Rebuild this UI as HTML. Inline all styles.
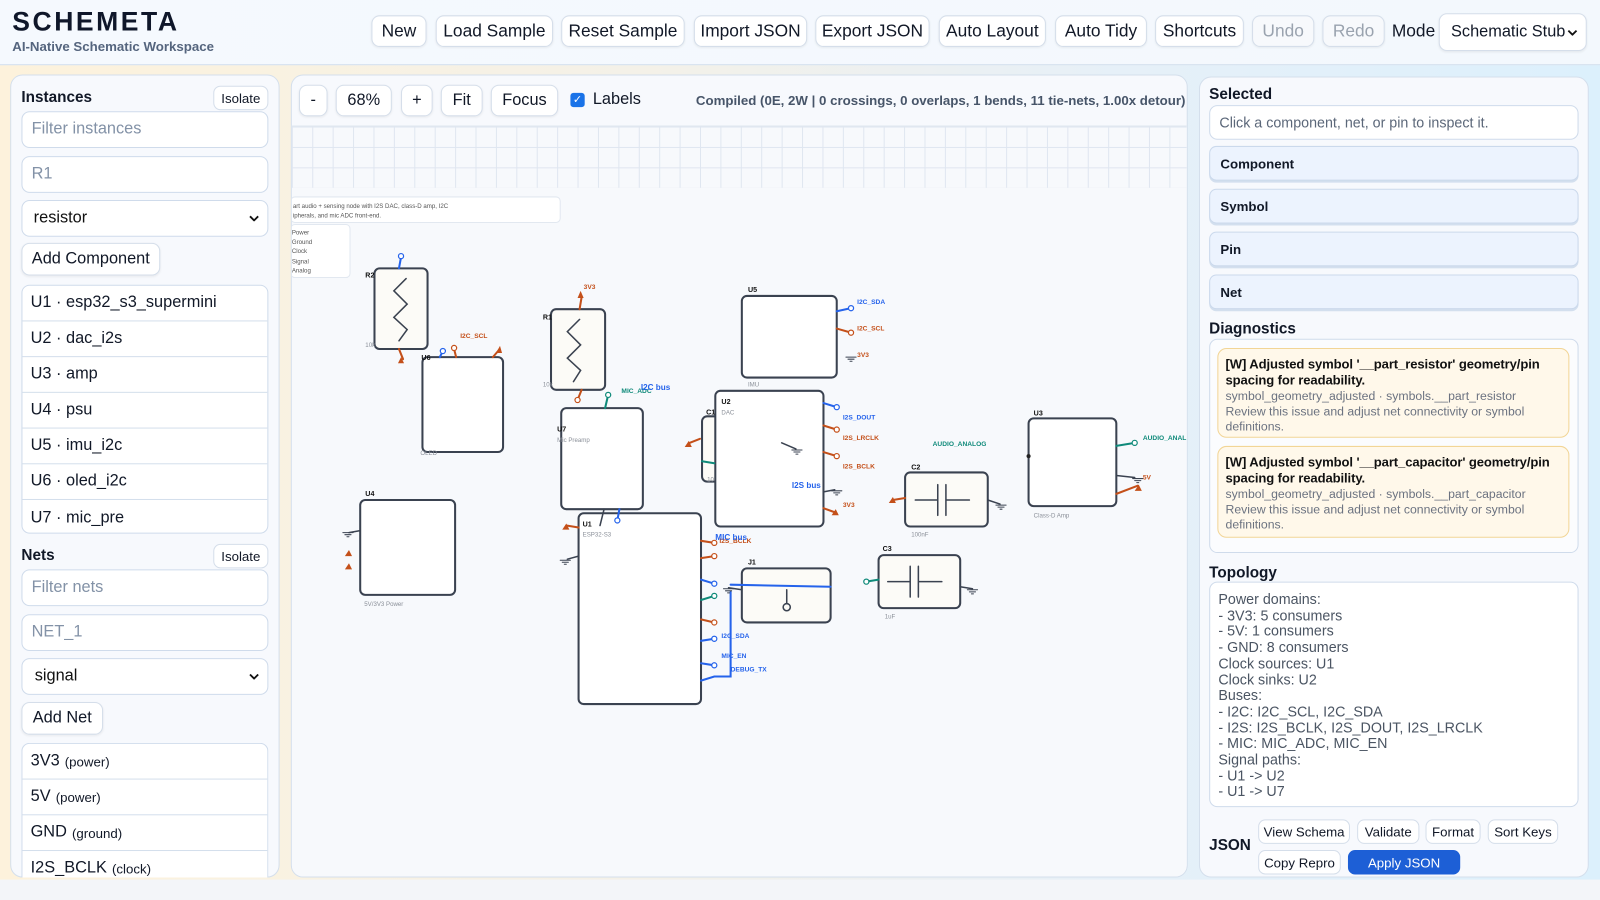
<!DOCTYPE html>
<html><head><meta charset="utf-8"><style>
*{box-sizing:border-box;margin:0;padding:0}
body{width:1600px;height:900px;overflow:hidden;font-family:"Liberation Sans",Arial,sans-serif;background:#f3f5f9;position:relative;color:#111827}
#root{position:absolute;left:0;top:0;width:1568px;height:882px;transform:scale(1.020408);transform-origin:0 0}
.abs{position:absolute}
.hdr{left:0;top:0;width:1568px;height:64px;background:linear-gradient(90deg,#f5f9fe,#f3f8fd);border-bottom:1px solid #cfdcec}
.main{left:0;top:64px;width:1568px;height:798px;background:linear-gradient(90deg,#fdf2dc 0%,#f4f1e8 40%,#e6f0f8 70%,#dcf0fc 100%)}
.btn{position:absolute;height:31px;border:1px solid #d5deea;border-radius:8px;background:#fff;font-size:17px;display:flex;align-items:center;justify-content:center;color:#111827;box-shadow:0 1px 2px rgba(0,0,0,.06);white-space:nowrap}
.dis{color:#9aa3af;background:#f7f9fc}
.panel{position:absolute;background:#f7f9fd;border:1px solid #d4dfec;border-radius:12px}
.inp{position:absolute;border:1px solid #cfdbeb;border-radius:8px;background:#fff;font-size:16px;color:#8392a7;padding-left:9px;display:flex;align-items:center}
.title{position:absolute;font-weight:bold;font-size:15px}
.sm{position:absolute;height:24px;border:1px solid #d5deea;border-radius:7px;background:#fff;font-size:13px;display:flex;align-items:center;justify-content:center}
.list{position:absolute;border:1px solid #cfdbeb;border-radius:8px;background:#fff;overflow:hidden}
.list div{height:35px;border-bottom:1px solid #d4dfec;font-size:16px;padding-left:8px;display:flex;align-items:center}
.list small{font-size:13px;margin-left:5px}
.acc{position:absolute;left:1185px;width:362px;height:34px;border:1px solid #cbd9ec;border-radius:7px;background:#ecf3fe;font-weight:bold;font-size:13px;padding-left:10px;display:flex;align-items:center;box-shadow:0 2px 0 #d3dfee}
.card{position:absolute;left:1193px;width:345px;border:1px solid #f2d596;border-radius:9px;background:#fff8ea;padding:7px 7px;font-size:12px;color:#6b7280;line-height:15px}
.card b{color:#111;font-size:12.8px;display:block;line-height:16px;letter-spacing:-0.1px}
.chev{position:absolute;right:8px;top:50%;margin-top:-3px}
</style></head><body><div id="root">
<div class="abs hdr"></div>
<div class="abs" style="left:12px;top:6px;font-size:26px;font-weight:bold;letter-spacing:2.5px;color:#0f172a">SCHEMETA</div>
<div class="abs" style="left:12px;top:38px;font-size:13px;font-weight:bold;color:#55657e">AI-Native Schematic Workspace</div>
<div class="btn" style="left:364px;top:15px;width:54px">New</div>
<div class="btn" style="left:427px;top:15px;width:115px">Load Sample</div>
<div class="btn" style="left:550px;top:15px;width:121px">Reset Sample</div>
<div class="btn" style="left:680px;top:15px;width:111px">Import JSON</div>
<div class="btn" style="left:799px;top:15px;width:112px">Export JSON</div>
<div class="btn" style="left:920px;top:15px;width:105px">Auto Layout</div>
<div class="btn" style="left:1034px;top:15px;width:90px">Auto Tidy</div>
<div class="btn" style="left:1132px;top:15px;width:87px">Shortcuts</div>
<div class="btn dis" style="left:1227px;top:15px;width:61px">Undo</div>
<div class="btn dis" style="left:1296px;top:15px;width:61px">Redo</div>
<div class="abs" style="left:1364px;top:21px;font-size:17px">Mode</div>
<div class="btn" style="left:1410px;top:13px;width:145px;height:37px;justify-content:flex-start;padding-left:11px;font-size:16px">Schematic Stub<svg class="chev" width="10" height="6"><path d="M1 1 L5 5 L9 1" fill="none" stroke="#111" stroke-width="1.8"/></svg></div>

<div class="abs main"></div>
<div class="panel" style="left:10px;top:73px;width:264px;height:787px"></div>
<div class="title" style="left:21px;top:87px">Instances</div>
<div class="sm" style="left:209px;top:84px;width:54px">Isolate</div>
<div class="inp" style="left:21px;top:109px;width:242px;height:36px">Filter instances</div>
<div class="inp" style="left:21px;top:153px;width:242px;height:36px">R1</div>
<div class="inp" style="left:21px;top:196px;width:242px;height:36px;color:#111;padding-left:11px">resistor<svg class="chev" width="10" height="6"><path d="M1 1 L5 5 L9 1" fill="none" stroke="#111" stroke-width="1.8"/></svg></div>
<div class="btn" style="left:21px;top:238px;width:136px;height:32px;font-size:16px">Add Component</div>
<div class="list" style="left:21px;top:279px;width:242px;height:244px">
<div>U1 · esp32_s3_supermini</div><div>U2 · dac_i2s</div><div>U3 · amp</div><div>U4 · psu</div><div>U5 · imu_i2c</div><div>U6 · oled_i2c</div><div style="border:0">U7 · mic_pre</div></div>
<div class="title" style="left:21px;top:536px">Nets</div>
<div class="sm" style="left:209px;top:533px;width:54px">Isolate</div>
<div class="inp" style="left:21px;top:558px;width:242px;height:36px">Filter nets</div>
<div class="inp" style="left:21px;top:602px;width:242px;height:36px">NET_1</div>
<div class="inp" style="left:21px;top:645px;width:242px;height:36px;color:#111;padding-left:12px">signal<svg class="chev" width="10" height="6"><path d="M1 1 L5 5 L9 1" fill="none" stroke="#111" stroke-width="1.8"/></svg></div>
<div class="btn" style="left:21px;top:688px;width:80px;height:32px;font-size:16px">Add Net</div>
<div class="list" style="left:21px;top:728px;width:242px;height:132px;border-bottom:0;border-radius:8px 8px 0 0">
<div>3V3<small>(power)</small></div><div>5V<small>(power)</small></div><div>GND<small>(ground)</small></div><div>I2S_BCLK<small>(clock)</small></div></div>

<div class="panel" style="left:285px;top:73px;width:879px;height:787px;overflow:hidden">
<div class="abs" style="left:0;top:49px;width:879px;height:738px;background:#f7f9fc"></div>
<div class="abs" style="left:0;top:49px;width:879px;height:61px;background-image:linear-gradient(#dfe6f0 1px,transparent 1px),linear-gradient(90deg,#dfe6f0 1px,transparent 1px);background-size:20px 20px;border-top:1px solid #dfe6f0"></div>
</div>
<div class="btn" style="left:293px;top:83px;width:28px;font-size:16px">-</div>
<div class="btn" style="left:329px;top:83px;width:55px;font-size:16px">68%</div>
<div class="btn" style="left:393px;top:83px;width:31px;font-size:16px">+</div>
<div class="btn" style="left:432px;top:83px;width:41px;font-size:16px">Fit</div>
<div class="btn" style="left:481px;top:83px;width:66px;font-size:16px">Focus</div>
<div class="abs" style="left:559px;top:91px;width:14px;height:14px;background:#1a73e8;border-radius:3px;color:#fff;font-size:11px;text-align:center;line-height:14px">✓</div>
<div class="abs" style="left:581px;top:89px;font-size:16px">Labels</div>
<div class="abs" style="left:682px;top:91px;font-size:13px;font-weight:bold;color:#475569">Compiled (0E, 2W | 0 crossings, 0 overlaps, 1 bends, 11 tie-nets, 1.00x detour)</div>

<svg class="abs" style="left:286px;top:123px" width="877" height="736" viewBox="286 123 877 736" font-family="Liberation Sans,Arial,sans-serif">
<g fill="none" stroke-linecap="round">
<rect x="285" y="193" width="264" height="25" rx="4" fill="#fff" stroke="#e2e8f0"/>
<rect x="285" y="220" width="58" height="52" rx="4" fill="#fff" stroke="#e2e8f0"/>
<g stroke="#3a4250" stroke-width="2">
<rect x="367" y="263" width="52" height="79" rx="5" fill="#fcfbf7"/>
<rect x="414" y="350" width="79" height="93" rx="5" fill="#fff"/>
<rect x="540" y="303" width="53" height="79" rx="5" fill="#fcfbf7"/>
<rect x="727" y="290" width="93" height="80" rx="5" fill="#fff"/>
<rect x="550" y="400" width="80" height="99" rx="5" fill="#fff"/>
<rect x="688" y="408" width="20" height="64" rx="5" fill="#fcfbf7"/>
<rect x="701" y="383" width="106" height="133" rx="5" fill="#fff"/>
<rect x="353" y="490" width="93" height="93" rx="5" fill="#fff"/>
<rect x="567" y="503" width="120" height="187" rx="5" fill="#fff"/>
<rect x="727" y="557" width="87" height="53" rx="5" fill="#fcfbf7"/>
<rect x="887" y="463" width="81" height="53" rx="5" fill="#fcfbf7"/>
<rect x="861" y="544" width="80" height="52" rx="5" fill="#fcfbf7"/>
<rect x="1008" y="410" width="86" height="86" rx="5" fill="#fff"/>
</g>
<g stroke="#3a4250" stroke-width="1.5">
<path d="M398 273 L386 285 L399 298 L386 311 L399 323 L391 334"/>
<path d="M568 313 L556 325 L569 338 L556 351 L569 363 L562 374"/>
<path d="M897 490 H919 M919 475 V505 M927 475 V505 M927 490 H950"/>
<path d="M870 570 H892 M892 555 V585 M900 555 V585 M900 570 H923"/>
<circle cx="771" cy="595" r="3.5"/><path d="M771 578 V591"/>
</g>
<g stroke="#c4501a" stroke-width="2">
<path d="M391 342 L395 352"/><path d="M568 303 L570 291"/><path d="M570 382 L566 392"/>
<path d="M483 350 L489 343"/><path d="M447 350 L445 342"/>
<path d="M686 430 L676 434"/><path d="M807 417 L820 421"/><path d="M807 443 L820 447"/><path d="M807 498 L818 502"/>
<path d="M687 530 L700 532"/><path d="M687 547 L700 545"/><path d="M687 607 L700 610"/>
<path d="M887 488 L875 490"/><path d="M1094 484 L1115 476"/><path d="M567 517 L555 515"/>
<path d="M820 322 L834 326"/>
</g>
<g stroke="#2563eb" stroke-width="2">
<path d="M391 263 L393 252"/><path d="M431 350 L434 344"/><path d="M607 499 L605 510"/>
<path d="M807 395 L820 399"/><path d="M820 305 L834 302"/>
<path d="M687 568 L700 572"/><path d="M687 628 L700 626"/><path d="M687 650 L700 652"/>
<path d="M687 667 L700 663 H716 V580 M716 573 L814 575"/>
</g>
<g stroke="#0f8a7a" stroke-width="2">
<path d="M593 400 L596 387"/><path d="M688 452 L700 454"/><path d="M687 588 L700 584"/><path d="M1094 437 L1112 434"/><path d="M861 568 L849 570"/>
</g>
<g stroke="#3a4250" stroke-width="1.5"><path d="M807 482 L818 480"/><path d="M941 575 L953 577"/><path d="M968 490 L980 494"/><path d="M1094 466 L1112 468"/><path d="M567 545 L556 548"/><path d="M353 520 L342 522"/><path d="M727 578 L714 576"/><path d="M766 434 L780 440"/><path d="M592 499 L588 515"/></g>
<g fill="#fff" stroke-width="1.2">
<circle cx="393" cy="251" r="2.5" stroke="#2563eb"/><circle cx="820" cy="399" r="2.5" stroke="#2563eb"/><circle cx="834" cy="302" r="2.5" stroke="#2563eb"/><circle cx="434" cy="344" r="2.5" stroke="#2563eb"/><circle cx="605" cy="510" r="2.5" stroke="#2563eb"/><circle cx="700" cy="572" r="2.5" stroke="#2563eb"/><circle cx="700" cy="626" r="2.5" stroke="#2563eb"/><circle cx="700" cy="652" r="2.5" stroke="#2563eb"/>
<circle cx="820" cy="421" r="2.5" stroke="#c4501a"/><circle cx="820" cy="447" r="2.5" stroke="#c4501a"/><circle cx="834" cy="326" r="2.5" stroke="#c4501a"/><circle cx="566" cy="392" r="2.5" stroke="#c4501a"/><circle cx="445" cy="341" r="2.5" stroke="#c4501a"/><circle cx="700" cy="532" r="2.5" stroke="#c4501a"/><circle cx="700" cy="545" r="2.5" stroke="#c4501a"/><circle cx="700" cy="610" r="2.5" stroke="#c4501a"/>
<circle cx="596" cy="387" r="2.5" stroke="#0f8a7a"/><circle cx="1112" cy="434" r="2.5" stroke="#0f8a7a"/><circle cx="849" cy="570" r="2.5" stroke="#0f8a7a"/><circle cx="700" cy="584" r="2.5" stroke="#0f8a7a"/>
</g>
<g fill="#c4501a">
<path d="M393 356 l-3 0 l3-6 l3 6z"/><path d="M566 292 l6 0 l-3-7z"/><path d="M486 346 l6 0 l-2-7z"/>
<path d="M671 438 l7 0 l-3-6z"/><path d="M815 505 l7 0 l-3-6z"/><path d="M871 493 l7 0 l-3-6z"/><path d="M1112 481 l7 0 l-3-6z"/><path d="M551 519 l7 0 l-3-6z"/>
<path d="M338 545 l7 0 l-3-6z"/><path d="M338 558 l7 0 l-3-6z"/>
</g>
<g stroke="#3a4250" stroke-width="1"><path d="M776 441 h10 M778 443 h6 M780 445 h2"/><path d="M815 481 h10 M817 483 h6 M819 485 h2"/><path d="M948 578 h10 M950 580 h6 M952 582 h2"/><path d="M976 495 h10 M978 497 h6 M980 499 h2"/><path d="M1110 469 h10 M1112 471 h6 M1114 473 h2"/><path d="M549 549 h10 M551 551 h6 M553 553 h2"/><path d="M336 522 h10 M338 524 h6 M340 526 h2"/><path d="M709 577 h10 M711 579 h6 M713 581 h2"/><path d="M829 350 h10 M831 352 h6 M833 354 h2"/></g>
<circle cx="1008" cy="447" r="2" fill="#222"/>
</g>
<g font-size="6" fill="#555"><text x="287" y="204">art audio + sensing node with I2S DAC, class-D amp, I2C</text><text x="287" y="213">ipherals, and mic ADC front-end.</text>
<text x="286" y="230">Power</text><text x="286" y="239">Ground</text><text x="286" y="248">Clock</text><text x="286" y="258">Signal</text><text x="286" y="267">Analog</text></g>
<g font-size="7" font-weight="bold" fill="#111"><text x="358" y="272">R2</text><text x="413" y="353">U6</text><text x="532" y="313">R1</text><text x="733" y="286">U5</text><text x="546" y="423">U7</text><text x="692" y="406">C1</text><text x="707" y="396">U2</text><text x="358" y="486">U4</text><text x="571" y="516">U1</text><text x="733" y="553">J1</text><text x="893" y="460">C2</text><text x="865" y="540">C3</text><text x="1013" y="407">U3</text></g>
<g font-size="6" fill="#8a8f98"><text x="707" y="406">DAC</text><text x="546" y="433">Mic Preamp</text><text x="733" y="379">IMU</text><text x="357" y="594">5V/3V3 Power</text><text x="571" y="526">ESP32-S3</text><text x="1013" y="507">Class-D Amp</text><text x="893" y="526">100nF</text><text x="867" y="606">1uF</text><text x="358" y="340">10k</text><text x="532" y="379">10k</text><text x="412" y="446">OLED</text><text x="693" y="472">10</text></g>
<g font-size="6.5" font-weight="bold">
<text x="451" y="331" fill="#c4501a">I2C_SCL</text><text x="572" y="283" fill="#c4501a">3V3</text>
<text x="609" y="385" fill="#0f8a7a">MIC_ADC</text><text x="628" y="382" fill="#2563eb" font-size="8">I2C bus</text>
<text x="840" y="298" fill="#2563eb">I2C_SDA</text><text x="840" y="324" fill="#c4501a">I2C_SCL</text><text x="840" y="350" fill="#c4501a">3V3</text>
<text x="826" y="411" fill="#2563eb">I2S_DOUT</text><text x="826" y="431" fill="#c4501a">I2S_LRCLK</text><text x="826" y="459" fill="#c4501a">I2S_BCLK</text><text x="826" y="497" fill="#c4501a">3V3</text>
<text x="776" y="478" fill="#2563eb" font-size="8">I2S bus</text>
<text x="914" y="437" fill="#0f8a7a">AUDIO_ANALOG</text><text x="1120" y="431" fill="#0f8a7a">AUDIO_ANAL</text><text x="1120" y="470" fill="#c4501a">5V</text>
<text x="705" y="532" fill="#c4501a">I2S_BCLK</text><text x="701" y="529" fill="#2563eb" font-size="8">MIC bus</text>
<text x="707" y="625" fill="#2563eb">I2C_SDA</text><text x="707" y="645" fill="#2563eb">MIC_EN</text><text x="716" y="658" fill="#2563eb">DEBUG_TX</text>
</g>
</svg>

<div class="panel" style="left:1175px;top:75px;width:382px;height:785px"></div>
<div class="title" style="left:1185px;top:84px">Selected</div>
<div class="inp" style="left:1185px;top:103px;width:362px;height:34px;font-size:14px;color:#5b6779">Click a component, net, or pin to inspect it.</div>
<div class="acc" style="top:143px">Component</div>
<div class="acc" style="top:185px">Symbol</div>
<div class="acc" style="top:227px">Pin</div>
<div class="acc" style="top:269px">Net</div>
<div class="title" style="left:1185px;top:314px">Diagnostics</div>
<div class="abs" style="left:1185px;top:332px;width:362px;height:210px;border:1px solid #cfdbeb;border-radius:8px;background:#fbfcfe"></div>
<div class="card" style="top:341px;height:88px"><b>[W] Adjusted symbol '__part_resistor' geometry/pin spacing for readability.</b>symbol_geometry_adjusted · symbols.__part_resistor<br>Review this issue and adjust net connectivity or symbol definitions.</div>
<div class="card" style="top:437px;height:90px"><b>[W] Adjusted symbol '__part_capacitor' geometry/pin spacing for readability.</b>symbol_geometry_adjusted · symbols.__part_capacitor<br>Review this issue and adjust net connectivity or symbol definitions.</div>
<div class="title" style="left:1185px;top:553px">Topology</div>
<div class="abs" style="left:1185px;top:570px;width:362px;height:221px;border:1px solid #cfdbeb;border-radius:8px;background:#fff;padding:9px 8px;font-size:14px;line-height:15.7px;color:#4b5563">Power domains:<br>- 3V3: 5 consumers<br>- 5V: 1 consumers<br>- GND: 8 consumers<br>Clock sources: U1<br>Clock sinks: U2<br>Buses:<br>- I2C: I2C_SCL, I2C_SDA<br>- I2S: I2S_BCLK, I2S_DOUT, I2S_LRCLK<br>- MIC: MIC_ADC, MIC_EN<br>Signal paths:<br>- U1 -&gt; U2<br>- U1 -&gt; U7</div>
<div class="title" style="left:1185px;top:820px">JSON</div>
<div class="sm" style="left:1233px;top:803px;width:90px">View Schema</div>
<div class="sm" style="left:1330px;top:803px;width:61px">Validate</div>
<div class="sm" style="left:1397px;top:803px;width:54px">Format</div>
<div class="sm" style="left:1458px;top:803px;width:69px">Sort Keys</div>
<div class="sm" style="left:1233px;top:833px;width:81px">Copy Repro</div>
<div class="sm" style="left:1321px;top:833px;width:110px;background:#1d5fd6;color:#fff;border-color:#1d5fd6">Apply JSON</div>
</div></body></html>
